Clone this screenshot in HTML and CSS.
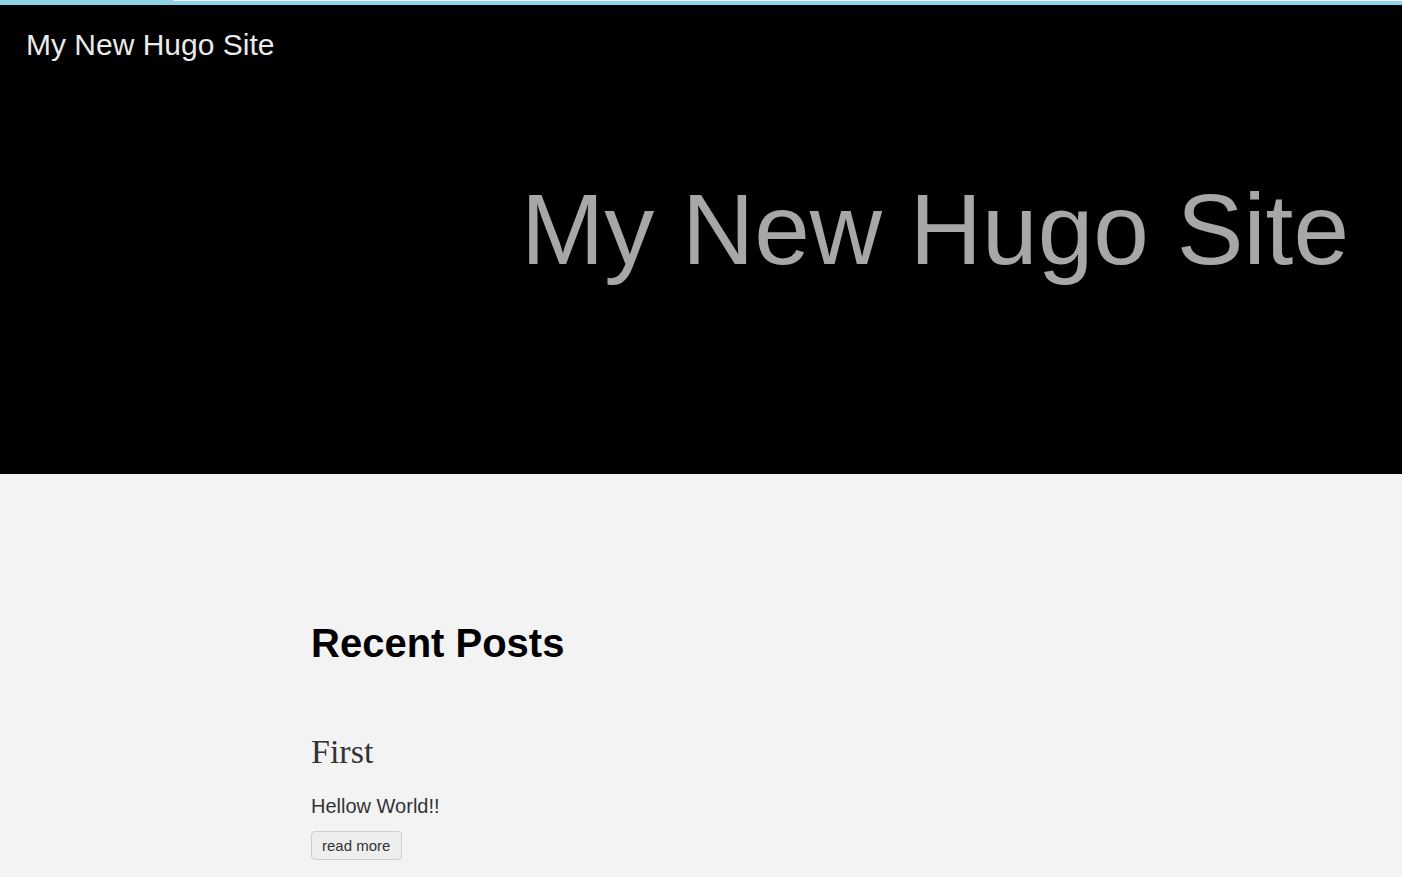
FILE: index.html
```html
<!DOCTYPE html>
<html lang="en">
<head>
<meta charset="utf-8">
<title>My New Hugo Site</title>
<link rel="stylesheet" href="styles.css">
</head>
<body>
<div class="progress"></div>
<header class="hero">
  <nav class="nav"><a class="brand" href="#">My New Hugo Site</a></nav>
  <h1 class="hero-title">My New Hugo Site</h1>
</header>
<main class="main">
  <div class="container">
    <h2 class="section-title">Recent Posts</h2>
    <article class="post">
      <h3 class="post-title">First</h3>
      <p class="post-summary">Hellow World!!</p>
      <a class="read-more" href="#">read more</a>
    </article>
  </div>
</main>
</body>
</html>
```
FILE: styles.css
```css
html, body {
  margin: 0;
  padding: 0;
}
body {
  font-family: "Liberation Sans", Arial, sans-serif;
  background: #f3f3f3;
  overflow: hidden;
  height: 877px;
}
.progress {
  height: 5px;
  background:
    linear-gradient(to right, transparent 0, transparent 173px, #f2f2f2 173px) top / 100% 1px no-repeat,
    #8fd3e8;
}
.hero {
  background: #000;
  height: 469px;
  display: flex;
  flex-direction: column;
}
.nav {
  padding: 23px 26px 0;
}
.brand {
  color: #eaeaea;
  font-size: 30px;
  line-height: 34.5px;
  text-decoration: none;
}
.hero-title {
  margin: 116px 0 0;
  padding-right: 53px;
  text-align: right;
  font-weight: normal;
  font-size: 100px;
  line-height: 100px;
  color: #a7a7a7;
}
.main {
  padding-top: 145px;
}
.container {
  width: 780px;
  margin: 0 auto;
}
.section-title {
  margin: 0;
  font-size: 40px;
  line-height: 48px;
  font-weight: bold;
  color: #000;
}
.post {
  padding-top: 66px;
}
.post-title {
  margin: 0;
  font-family: "Liberation Serif", "Times New Roman", serif;
  font-weight: normal;
  font-size: 34px;
  line-height: 38px;
  color: #333;
}
.post-summary {
  margin: 20px 0 0;
  font-size: 20px;
  line-height: 30px;
  color: #333;
}
.read-more {
  display: inline-block;
  margin-top: 10px;
  padding: 5px 11px 5px 10px;
  border: 1px solid #cfcfcf;
  border-radius: 4px;
  background: #eeeeee;
  color: #333;
  font-size: 15px;
  line-height: 17px;
  text-decoration: none;
}
```
